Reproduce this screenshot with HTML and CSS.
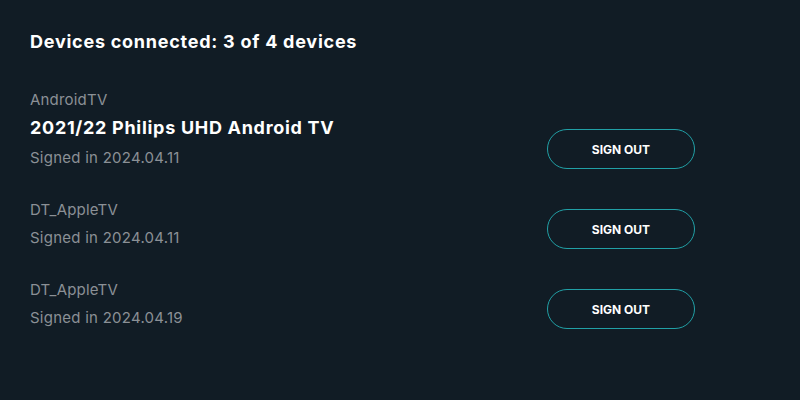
FILE: index.html
```html
<!DOCTYPE html>
<html lang="en">
  <head>
    <meta charset="UTF-8" />
    <meta name="viewport" content="width=device-width, initial-scale=1.0" />
    <title>Devices</title>
    <link rel="stylesheet" href="styles.css">
  </head>
  <body>
    <main class="devices">
      <h1 class="devices_title">Devices connected: 3 of 4 devices</h1>

      <ul class="device_list">
        <li class="device_item">
          <div class="device_info">
            <p class="device_type">AndroidTV</p>
            <p class="device_name">2021/22 Philips UHD Android TV</p>
            <p class="device_date">Signed in 2024.04.11</p>
          </div>
          <button class="sign_out">SIGN OUT</button>
        </li>
        <li class="device_item">
          <div class="device_info">
            <p class="device_type">DT_AppleTV</p>
            <p class="device_date">Signed in 2024.04.11</p>
          </div>
          <button class="sign_out">SIGN OUT</button>
        </li>
        <li class="device_item">
          <div class="device_info">
            <p class="device_type">DT_AppleTV</p>
            <p class="device_date">Signed in 2024.04.19</p>
          </div>
          <button class="sign_out">SIGN OUT</button>
        </li>
      </ul>
    </main>
  </body>
</html>
```

FILE: styles.css
```css
* {
  box-sizing: border-box;
}
html,
body {
  margin: 0;
  height: 100%;
  background-color: #111c25;
}
body {
  font-family: Inter, "Noto Sans", sans-serif;
  color: #fff;
}
main.devices {
  padding: 30px 0 0 30px;
  width: 695px;
}
h1.devices_title {
  margin: 0;
  font-size: 18px;
  line-height: 24px;
  font-weight: 700;
  letter-spacing: 0.75px;
}
ul.device_list {
  margin: 36px 0 0;
  padding: 0;
  list-style: none;
  display: flex;
  flex-direction: column;
  gap: 31px;
}
li.device_item {
  display: flex;
  align-items: flex-end;
  justify-content: space-between;
}
p {
  margin: 0;
}
p.device_type {
  font-size: 15px;
  line-height: 20px;
  color: #8b9096;
  letter-spacing: 0.2px;
}
p.device_name {
  margin-top: 6px;
  font-size: 18px;
  line-height: 24px;
  font-weight: 700;
  letter-spacing: 0.7px;
}
p.device_date {
  margin-top: 7px;
  font-size: 15px;
  line-height: 22px;
  color: #8b9096;
  letter-spacing: 0.25px;
}
button.sign_out {
  width: 148px;
  height: 40px;
  border: 1.5px solid #21a0a6;
  border-radius: 20px;
  background: transparent;
  color: #fff;
  font-family: Inter, sans-serif;
  font-size: 12px;
  font-weight: 700;
  cursor: pointer;
}
```
